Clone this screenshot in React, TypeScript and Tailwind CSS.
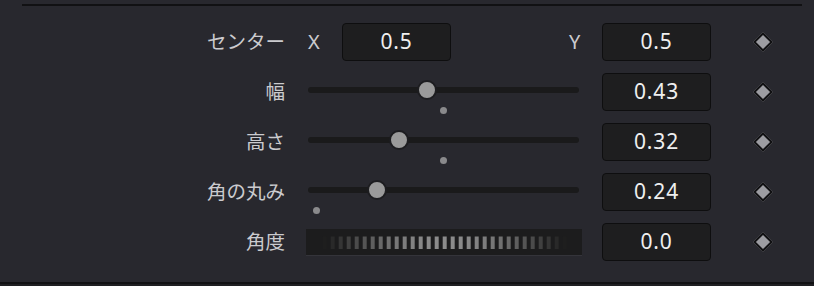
import React from "react";

const font = { fontFamily: '"Noto Sans", "Noto Sans CJK JP", sans-serif' };

function Diamond() {
  return (
    <div className="ml-[42px] flex h-[20px] w-[20px] items-center justify-center">
      <div className="h-[14px] w-[14px] rotate-45 border-2 border-[#111113] bg-[#9c9ca1]" />
    </div>
  );
}

function ValueBox({ v }: { v: string }) {
  return (
    <div className="flex h-[38px] w-[109px] items-center justify-center rounded-[4px] border border-[#0e0e0f] bg-[#1e1e1f] text-[21px] tracking-[0.04em] text-[#efefef]">
      {v}
    </div>
  );
}

function Label({ t }: { t: string }) {
  return <div className="w-[286px] pr-[1px] text-right text-[19.5px] leading-none text-[#cbcbce]">{t}</div>;
}

function Slider({ thumb, dot }: { thumb: number; dot: number }) {
  return (
    <div className="relative ml-[20px] h-[50px] w-[276px]">
      <div className="absolute left-[2px] right-[3px] top-[20px] h-[6px] rounded-full bg-[#1a1a1b]" />
      <div
        className="absolute top-[13px] h-[20px] w-[20px] rounded-full border-2 border-[#1d1d20] bg-[#9a9a9a]"
        style={{ left: thumb - 306 - 10 }}
      />
      <div
        className="absolute top-[40px] h-[7px] w-[7px] rounded-full bg-[#8a8a8c]"
        style={{ left: dot - 306 - 3.5 }}
      />
    </div>
  );
}

function Wheel() {
  const ticks = Array.from({ length: 31 }, (_, k) => {
    const a = ((k - 15) / 15) * (Math.PI / 2);
    const l = Math.round(30 + 110 * Math.cos(a));
    return { x: 16.7 + 8 * k, c: `rgb(${l},${l},${l})` };
  });
  return (
    <div className="ml-[20px] h-[27px] w-[276px] border-b border-[#34343a] bg-[#1c1c1d]">
      <svg width="276" height="26" viewBox="0 0 276 26">
        {ticks.map((t, i) => (
          <rect key={i} x={t.x} y={7.5} width={4} height={12.5} fill={t.c} />
        ))}
      </svg>
    </div>
  );
}

function Row({ children }: { children: React.ReactNode }) {
  return <div className="flex h-[50px] items-center">{children}</div>;
}

export default function App() {
  return (
    <div className="flex h-[286px] w-[814px] flex-col bg-[#28282e]" style={font}>
      <div className="ml-[22px] mt-[4px] h-[2px] w-[780px] bg-[#111113]" />
      <div className="mt-[11px] flex flex-col">
        <Row>
          <Label t="センター" />
          <div className="ml-[20px] flex w-[276px] items-center">
            <span className="ml-[2px] w-[34px] text-[20px] leading-none text-[#cbcbce]">X</span>
            <ValueBox v="0.5" />
            <span className="ml-[118px] text-[20px] leading-none text-[#cbcbce]">Y</span>
          </div>
          <div className="ml-[20px]">
            <ValueBox v="0.5" />
          </div>
          <Diamond />
        </Row>
        <Row>
          <Label t="幅" />
          <Slider thumb={427} dot={443.5} />
          <div className="ml-[20px]">
            <ValueBox v="0.43" />
          </div>
          <Diamond />
        </Row>
        <Row>
          <Label t="高さ" />
          <Slider thumb={399} dot={443.5} />
          <div className="ml-[20px]">
            <ValueBox v="0.32" />
          </div>
          <Diamond />
        </Row>
        <Row>
          <Label t="角の丸み" />
          <Slider thumb={377} dot={316} />
          <div className="ml-[20px]">
            <ValueBox v="0.24" />
          </div>
          <Diamond />
        </Row>
        <Row>
          <Label t="角度" />
          <Wheel />
          <div className="ml-[20px]">
            <ValueBox v="0.0" />
          </div>
          <Diamond />
        </Row>
      </div>
      <div className="mt-auto h-[2px] w-full bg-[#111113]" />
      <div className="h-[2px] w-full bg-[#1f1f22]" />
    </div>
  );
}
